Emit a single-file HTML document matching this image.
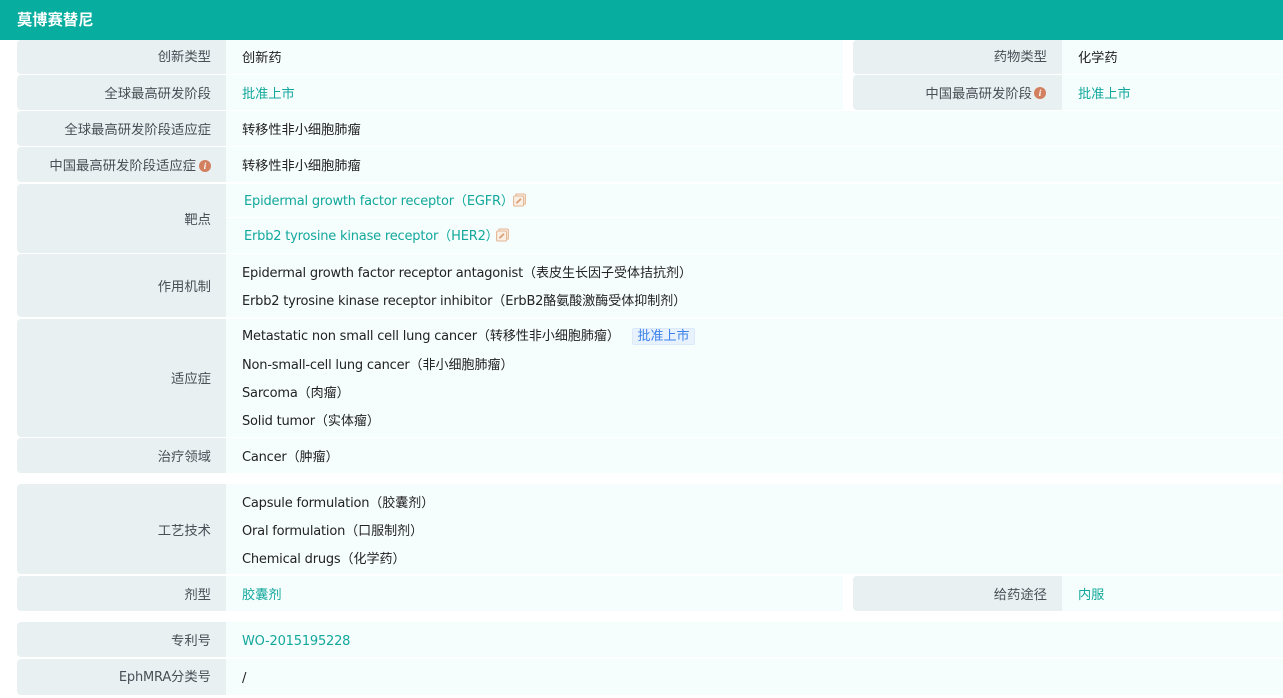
<!DOCTYPE html>
<html><head><meta charset="utf-8">
<style>
html,body{margin:0;padding:0;background:#fff;width:1283px;height:698px;overflow:hidden}
body{position:relative;font-family:"DejaVu Sans","Noto Sans CJK SC",sans-serif;font-size:13.33px}
.h{position:absolute;left:0;top:0;width:1283px;height:40px;background:#07ad9f;color:#fff;font-weight:700;font-size:15.3px;line-height:41px;text-indent:17px}
.l,.v{position:absolute;box-sizing:border-box}
.l{background:#e8f0f1;border-radius:4px 0 0 4px;color:#4a4f57;text-align:right;padding-right:15px;padding-top:2px;white-space:nowrap}
.v{background:#f6fdfd}
.t{position:absolute;white-space:nowrap;color:#222;line-height:20px;margin-top:4px;font-size:13.2px}
.m{font-size:13px}
.e{font-style:normal;font-size:13px;letter-spacing:-.2px}
.g{color:#12a89c}
.i{display:inline-block;width:12px;height:12px;border-radius:50%;background:#d2805f;color:#fff;font:italic 700 9px/12px "Liberation Serif",serif;text-align:center;vertical-align:1px;margin-left:3px;text-indent:0}
svg{position:absolute}
.tag{position:absolute;left:632px;top:328px;width:63px;height:17px;box-sizing:border-box;background:#e8f2fd;border:1px solid #dbe9fb;border-radius:2px;color:#3c82ea;font-size:13px;line-height:16px;text-align:center;white-space:nowrap}
</style></head><body>
<div class="h">莫博赛替尼</div>

<div class="l" style="left:17px;top:40px;width:209px;height:34px;line-height:32px">创新类型</div>
<div class="v" style="left:226px;top:40px;width:617px;height:34px"></div>
<div class="l" style="left:853px;top:40px;width:209px;height:34px;line-height:32px">药物类型</div>
<div class="v" style="left:1062px;top:40px;width:221px;height:34px"></div>
<div class="t" style="left:242px;top:45px">创新药</div>
<div class="t" style="left:1078px;top:45px">化学药</div>

<div class="l" style="left:17px;top:75px;width:209px;height:35px;line-height:35px">全球最高研发阶段</div>
<div class="v" style="left:226px;top:75px;width:617px;height:35px"></div>
<div class="l" style="left:853px;top:75px;width:209px;height:35px;line-height:35px;padding-right:16px">中国最高研发阶段<span class="i" style="vertical-align:2.5px;margin-left:2px">i</span></div>
<div class="v" style="left:1062px;top:75px;width:221px;height:35px"></div>
<div class="t g" style="left:242px;top:81px">批准上市</div>
<div class="t g" style="left:1078px;top:81px">批准上市</div>

<div class="l" style="left:17px;top:111px;width:209px;height:35px;line-height:35px">全球最高研发阶段适应症</div>
<div class="v" style="left:226px;top:111px;width:1057px;height:35px"></div>
<div class="t" style="left:242px;top:117px">转移性非小细胞肺瘤</div>

<div class="l" style="left:17px;top:147px;width:209px;height:35px;line-height:35px">中国最高研发阶段适应症<span class="i">i</span></div>
<div class="v" style="left:226px;top:147px;width:1057px;height:35px"></div>
<div class="t" style="left:242px;top:153px">转移性非小细胞肺瘤</div>

<div class="l" style="left:17px;top:184px;width:209px;height:69px;line-height:69px">靶点</div>
<div class="v" style="left:226px;top:184px;width:1057px;height:33px"></div>
<div class="v" style="left:226px;top:218px;width:1057px;height:35px"></div>
<div class="t m g" style="left:244px;top:188px"><i class="e">Epidermal growth factor receptor</i>（<i class="e">EGFR</i>）</div>
<svg style="left:513px;top:193px" width="13" height="14" viewBox="0 0 13 14" fill="#fbeee3" stroke="#e3b896" stroke-width="1.1"><path d="M3 3V1h8.2a1.2 1.2 0 0 1 1.2 1.2V11h-2" /><rect x=".6" y="3" width="10" height="10" rx="1.3"/><path d="M3.4 10.2L8 5.8" stroke="#dca27c" stroke-width="1.8" fill="none"/></svg>
<div class="t m g" style="left:244px;top:223px"><i class="e">Erbb2 tyrosine kinase receptor</i>（<i class="e">HER2</i>）</div>
<svg style="left:496px;top:228px" width="13" height="14" viewBox="0 0 13 14" fill="#fbeee3" stroke="#e3b896" stroke-width="1.1"><path d="M3 3V1h8.2a1.2 1.2 0 0 1 1.2 1.2V11h-2" /><rect x=".6" y="3" width="10" height="10" rx="1.3"/><path d="M3.4 10.2L8 5.8" stroke="#dca27c" stroke-width="1.8" fill="none"/></svg>

<div class="l" style="left:17px;top:254px;width:209px;height:63px;line-height:63px">作用机制</div>
<div class="v" style="left:226px;top:254px;width:1057px;height:63px"></div>
<div class="t m" style="left:242px;top:260px"><i class="e">Epidermal growth factor receptor antagonist</i>（表皮生长因子受体拮抗剂）</div>
<div class="t m" style="left:242px;top:288px"><i class="e">Erbb2 tyrosine kinase receptor inhibitor</i>（<i class="e">ErbB2</i>酪氨酸激酶受体抑制剂）</div>

<div class="l" style="left:17px;top:319px;width:209px;height:118px;line-height:118px">适应症</div>
<div class="v" style="left:226px;top:319px;width:1057px;height:118px"></div>
<div class="t m" style="left:242px;top:323px"><i class="e">Metastatic non small cell lung cancer</i>（转移性非小细胞肺瘤）</div>
<div class="tag">批准上市</div>
<div class="t m" style="left:242px;top:352px"><i class="e">Non-small-cell lung cancer</i>（非小细胞肺瘤）</div>
<div class="t m" style="left:242px;top:380px"><i class="e">Sarcoma</i>（肉瘤）</div>
<div class="t m" style="left:242px;top:408px"><i class="e">Solid tumor</i>（实体瘤）</div>

<div class="l" style="left:17px;top:438px;width:209px;height:35px;line-height:35px">治疗领域</div>
<div class="v" style="left:226px;top:438px;width:1057px;height:35px"></div>
<div class="t m" style="left:242px;top:444px"><i class="e">Cancer</i>（肿瘤）</div>

<div class="l" style="left:17px;top:484px;width:209px;height:90px;line-height:92px">工艺技术</div>
<div class="v" style="left:226px;top:484px;width:1057px;height:90px"></div>
<div class="t m" style="left:242px;top:490px"><i class="e">Capsule formulation</i>（胶囊剂）</div>
<div class="t m" style="left:242px;top:518px"><i class="e">Oral formulation</i>（口服制剂）</div>
<div class="t m" style="left:242px;top:546px"><i class="e">Chemical drugs</i>（化学药）</div>

<div class="l" style="left:17px;top:576px;width:209px;height:35px;line-height:35px">剂型</div>
<div class="v" style="left:226px;top:576px;width:617px;height:35px"></div>
<div class="l" style="left:853px;top:576px;width:209px;height:35px;line-height:35px">给药途径</div>
<div class="v" style="left:1062px;top:576px;width:221px;height:35px"></div>
<div class="t g" style="left:242px;top:582px">胶囊剂</div>
<div class="t g" style="left:1078px;top:582px">内服</div>

<div class="l" style="left:17px;top:622px;width:209px;height:35px;line-height:35px">专利号</div>
<div class="v" style="left:226px;top:622px;width:1057px;height:35px"></div>
<div class="t g" style="left:242px;top:628px"><i class="e">WO-2015195228</i></div>

<div class="l" style="left:17px;top:659px;width:209px;height:36px;line-height:34px"><i class="e">EphMRA</i>分类号</div>
<div class="v" style="left:226px;top:659px;width:1057px;height:36px"></div>
<div class="t" style="left:242px;top:665px">/</div>
</body></html>
